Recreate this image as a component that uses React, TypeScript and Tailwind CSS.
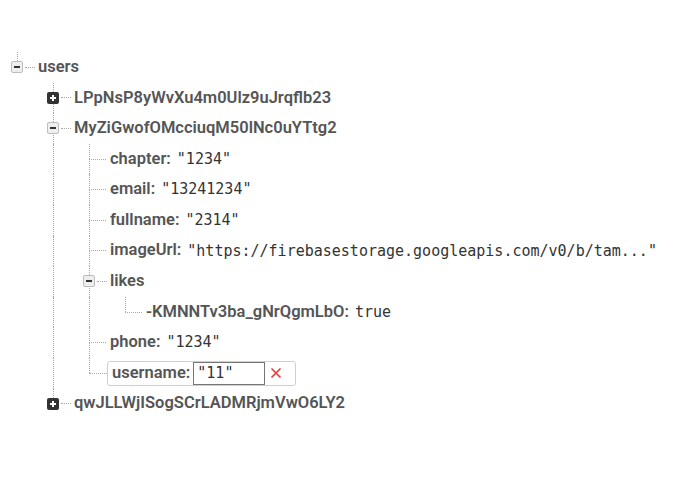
import React from "react";

type Node = {
  name: string;
  value?: string;
  open?: boolean;
  editing?: boolean;
  children?: Node[];
};

const tree: Node = {
  name: "users",
  open: true,
  children: [
    { name: "LPpNsP8yWvXu4m0Ulz9uJrqflb23", children: [] },
    {
      name: "MyZiGwofOMcciuqM50lNc0uYTtg2",
      open: true,
      children: [
        { name: "chapter", value: '"1234"' },
        { name: "email", value: '"13241234"' },
        { name: "fullname", value: '"2314"' },
        {
          name: "imageUrl",
          value: '"https://firebasestorage.googleapis.com/v0/b/tam..."',
        },
        {
          name: "likes",
          open: true,
          children: [{ name: "-KMNNTv3ba_gNrQgmLbO", value: "true" }],
        },
        { name: "phone", value: '"1234"' },
        { name: "username", value: '"11"', editing: true },
      ],
    },
    { name: "qwJLLWjISogSCrLADMRjmVwO6LY2", children: [] },
  ],
};

type Row = { node: Node; isLast: boolean; trunks: boolean[] };

// trunks[k] = should the vertical line of column k keep going through this row
function flatten(node: Node, isLast: boolean, trunks: boolean[], out: Row[]) {
  out.push({ node, isLast, trunks });
  if (node.children && node.open) {
    const next = [...trunks, !isLast];
    node.children.forEach((c, i) =>
      flatten(c, i === node.children!.length - 1, next, out)
    );
  }
}

function Toggle({ open }: { open: boolean }) {
  if (open) {
    return (
      <div className="relative z-10 flex h-3 w-3 items-center justify-center rounded-[2px] border border-[#bdbdbd] bg-[#eeeeee]">
        <div className="h-[2px] w-[6px] bg-[#333]" />
      </div>
    );
  }
  return (
    <div className="relative z-10 flex h-3 w-3 items-center justify-center rounded-[2px] bg-[#333]">
      <svg width="8" height="8" viewBox="0 0 8 8">
        <path d="M4 1v6M1 4h6" stroke="#fff" strokeWidth="2" />
      </svg>
    </div>
  );
}

function TreeRow({ row }: { row: Row }) {
  const { node, isLast, trunks } = row;
  const hasBox = node.children !== undefined;

  return (
    <div className="flex h-[30.6px] items-stretch">
      {trunks.map((t, i) => (
        <div key={i} className="relative w-9 shrink-0">
          {t && <div className="absolute left-[17px] top-0 h-full border-l border-dotted border-[#a8a8a8]" />}
        </div>
      ))}
      <div className="relative flex w-9 shrink-0 items-center">
        <div className="absolute left-[17px] top-0 h-1/2 border-l border-dotted border-[#a8a8a8]" />
        {!isLast && (
          <div className="absolute left-[17px] top-1/2 h-1/2 border-l border-dotted border-[#a8a8a8]" />
        )}
        {hasBox ? (
          <div className="ml-[11px] flex items-center">
            <Toggle open={!!node.open} />
            <div className="ml-[2px] w-[10px] border-t border-dotted border-[#a8a8a8]" />
          </div>
        ) : (
          <div className={`ml-[17px] border-t border-dotted border-[#a8a8a8] ${node.editing ? "w-[18px]" : "w-[17px]"}`} />
        )}
      </div>
      {node.editing ? (
        <div className="flex items-center">
          <div className="-ml-[1px] flex h-[25px] items-center rounded-[3px] border border-[#cfcfcf] bg-white pl-[4px] pr-[13px]">
            <span className="font-semibold text-[#555]">{node.name}:</span>
            <div className="ml-[3px] flex h-[23px] w-[72px] items-center border border-[#757575] pl-[3px] font-['DejaVu_Sans_Mono',monospace] text-[15px] text-[#333]">
              {node.value}
            </div>
            <svg className="ml-[5px]" width="12" height="12" viewBox="0 0 12 12">
              <path d="M1.5 1.5l9 9M10.5 1.5l-9 9" stroke="#e53935" strokeWidth="1.6" />
            </svg>
          </div>
        </div>
      ) : (
        <div className="ml-[2px] flex items-center whitespace-nowrap">
          <span className="font-semibold text-[#555]">
            {node.name}
            {node.value !== undefined && ":"}
          </span>
          {node.value !== undefined && (
            <span className="ml-[6px] font-['DejaVu_Sans_Mono',monospace] text-[15px] text-[#333]">
              {node.value}
            </span>
          )}
        </div>
      )}
    </div>
  );
}

export default function App() {
  const rows: Row[] = [];
  flatten(tree, true, [], rows);

  return (
    <div className="h-[494px] w-[695px] overflow-hidden bg-white pt-[52px] font-['Roboto',sans-serif] text-[16.5px]">
      {rows.map((r, i) => (
        <TreeRow key={i} row={r} />
      ))}
    </div>
  );
}
